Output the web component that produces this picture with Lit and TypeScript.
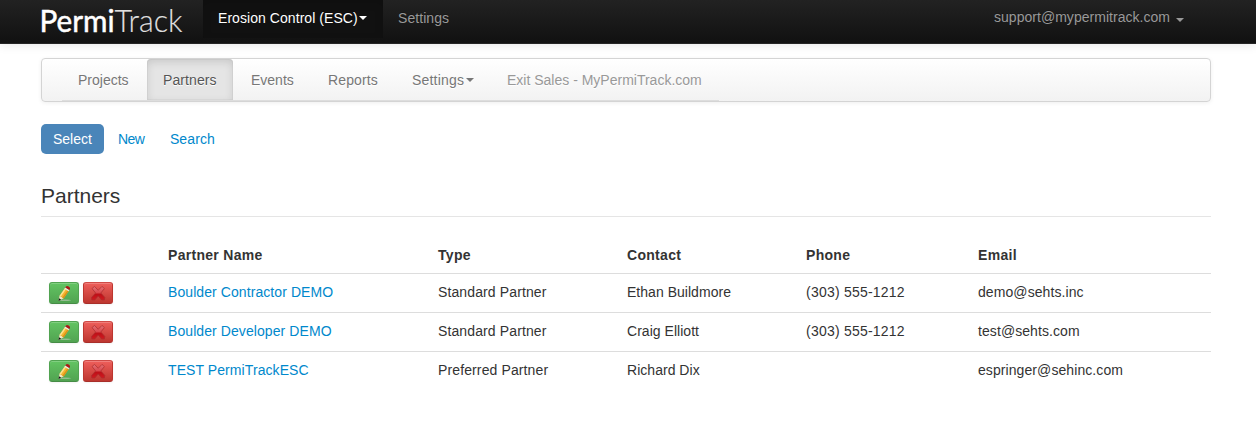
import { LitElement, html, css, svg } from "lit";
import { customElement } from "lit/decorators.js";

interface Partner {
  name: string;
  type: string;
  contact: string;
  phone: string;
  email: string;
}

const partners: Partner[] = [
  { name: "Boulder Contractor DEMO", type: "Standard Partner", contact: "Ethan Buildmore", phone: "(303) 555-1212", email: "demo@sehts.inc" },
  { name: "Boulder Developer DEMO", type: "Standard Partner", contact: "Craig Elliott", phone: "(303) 555-1212", email: "test@sehts.com" },
  { name: "TEST PermiTrackESC", type: "Preferred Partner", contact: "Richard Dix", phone: "", email: "espringer@sehinc.com" },
];

const pencil = html`<svg class="icon" viewBox="0 0 16 16">
  <ellipse cx="9" cy="15.3" rx="6" ry=".8" fill="#a9c4a6" opacity=".75" />
  <path d="M2.6 15.9 3.6 10.6 7.6 13.2Z" fill="#f8e3c4" />
  <path d="M2.5 16 3 13.2 5.2 14.7Z" fill="#151515" />
  <path d="M3.6 10.7 8.7 3.4 12.7 6 7.6 13.4Z" fill="#f5b52e" />
  <path d="M3.6 10.7 8.7 3.4 10 4.2 4.9 11.5Z" fill="#fde391" />
  <path d="M6.5 12.6 11.6 5.3 12.7 6 7.6 13.4Z" fill="#dc9118" />
  <path d="M8.5 3.7 9.4 2.4 13.4 5 12.5 6.3Z" fill="#efe9e2" />
  <path d="M9.3 2.5 10 1.5Q10.9.5 12.7 1.6 14.6 2.9 14 4L13.3 5.1Z" fill="#ad1717" />
</svg>`;

const cross = html`<svg class="icon" viewBox="0 0 16 16">
  <defs>
    <linearGradient id="x" x1="0" y1="0" x2="0" y2="1">
      <stop offset="0" stop-color="#e47376" />
      <stop offset=".48" stop-color="#d8484d" />
      <stop offset=".56" stop-color="#bd1018" />
      <stop offset="1" stop-color="#d01a20" />
    </linearGradient>
  </defs>
  <path d="M2 3.6 4.5 1.4 8.2 5.3 12 1.4 14.4 3.6 10.8 8 14.8 12.4 14.4 15 11.6 15 8.2 11 4.8 15 1.8 15 1.6 12.4 5.6 8Z"
    fill="url(#x)" stroke="#a92c2e" stroke-width=".7" stroke-linejoin="round" />
</svg>`;

@customElement("app-root")
export class AppRoot extends LitElement {
  static styles = css`
    :host {
      display: block;
      height: 429px;
      overflow: hidden;
      background: #fff;
      color: #333;
      font: 14px/20px "Liberation Sans", Arial, sans-serif;
    }
    * { box-sizing: border-box; }
    a { color: #0088cc; text-decoration: none; }
    .navbar {
      height: 44px;
      padding: 0 72px 0 41px;
      display: flex;
      align-items: flex-start;
      background: linear-gradient(#222, #111);
      border-bottom: 1px solid #252525;
      box-shadow: 0 1px 10px rgba(0, 0, 0, 0.1);
    }
    .brand { width: 162px; height: 43px; display: block; overflow: visible; }
    .logo { font-family: Lato, sans-serif; font-size: 30.5px; fill: #fff; stroke: #fff; stroke-width: 0.5px; }
    .logo-light { font-weight: 300; fill: #e0e0e0; stroke: #e0e0e0; stroke-width: 0.1px; }
    .nav-link {
      height: 38px;
      padding: 8px 15px 10px;
      color: #999;
      text-shadow: 0 -1px 0 rgba(0, 0, 0, 0.25);
      letter-spacing: 0.06px;
      display: flex;
      white-space: nowrap;
    }
    .nav-link.active {
      color: #fff;
      background: #111;
      width: 180px;
      box-shadow: inset 0 3px 8px rgba(0, 0, 0, 0.125);
    }
    .account { margin-left: auto; padding: 7px 0 0; letter-spacing: 0.03px; }
    .caret {
      width: 0;
      height: 0;
      border: 4px solid transparent;
      border-top-color: currentColor;
      border-bottom: 0;
      margin: 8px 0 0 1.5px;
    }
    .account .caret { margin: 11px 0 0 6px; }
    .page { padding: 14px 45px 0 41px; }
    .subnav {
      height: 44px;
      padding: 0 20px;
      border: 1px solid #d4d4d4;
      border-radius: 4px;
      background: linear-gradient(#fff, #f2f2f2);
      box-shadow: 0 1px 4px rgba(0, 0, 0, 0.065);
      display: flex;
    }
    .tabs { height: 42px; width: 657px; display: flex; border-bottom: 1px solid #ddd; }
    .tab {
      height: 41px;
      padding: 11px 0 0 16px;
      color: #777;
      display: flex;
      white-space: nowrap;
      text-shadow: 0 1px 0 #fff;
    }
    .tab.projects { width: 85px; }
    .tab.events { width: 77px; }
    .tab.reports { width: 84px; letter-spacing: 0.14px; }
    .tab.settings { width: 95px; letter-spacing: 0.2px; }
    .tab.active {
      width: 86px;
      margin-right: 2px;
      letter-spacing: 0.1px;
      color: #555;
      background: #e5e5e5;
      border-radius: 4px 4px 0 0;
      box-shadow: inset 0 3px 8px rgba(0, 0, 0, 0.125), inset 0 0 0 1px #ddd;
    }
    .tab.muted { color: #999; }
    .pills { display: flex; height: 30px; margin-top: 22px; gap: 2px; }
    .pill { padding: 5px 12px; border-radius: 5px; }
    .pill.active { background: #4a85b9; color: #fff; }
    .pill.new { width: 50px; letter-spacing: -0.5px; }
    .pill.search { letter-spacing: 0.1px; }
    h1 {
      height: 41px;
      margin: 22px 0 20px;
      border-bottom: 1px solid #e5e5e5;
      font-size: 21px;
      line-height: 40px;
      font-weight: 400;
    }
    table { width: 1170px; border-spacing: 0; table-layout: fixed; }
    th, td { text-align: left; vertical-align: top; padding: 8px; height: 39px; border-top: 1px solid #ddd; }
    th { height: 36px; border-top: 0; letter-spacing: 0.3px; }
    td { letter-spacing: 0.08px; }
    .c0 { width: 119px; }
    .c1 { width: 270px; }
    .c2 { width: 189px; }
    .c3 { width: 179px; }
    .c4 { width: 172px; }
    .type { letter-spacing: 0.12px; }
    .phone { letter-spacing: 0.22px; }
    .contact { letter-spacing: 0.03px; }
    .actions { display: flex; gap: 4px; }
    .btn {
      width: 30px;
      height: 22px;
      padding: 0;
      display: flex;
      align-items: center;
      justify-content: center;
      border: 1px solid;
      border-radius: 3px;
      box-shadow: inset 0 1px 0 rgba(255, 255, 255, 0.2), 0 1px 2px rgba(0, 0, 0, 0.05);
    }
    .edit { background: linear-gradient(#62c462, #51a351); border-color: #51a351 #51a351 #468c46; }
    .delete { background: linear-gradient(#ee5f5b, #bd362f); border-color: #cf4b47 #bd362f #a82f2a; }
    .icon { width: 16px; height: 16px; display: block; }
  `;

  private row(p: Partner) {
    return html`<tr>
      <td>
        <div class="actions">
          <button class="btn edit">${pencil}</button>
          <button class="btn delete">${cross}</button>
        </div>
      </td>
      <td><a href="#">${p.name}</a></td>
      <td class="type">${p.type}</td>
      <td class="contact">${p.contact}</td>
      <td class="phone">${p.phone}</td>
      <td>${p.email}</td>
    </tr>`;
  }

  render() {
    return html`
      <nav class="navbar">
        <svg class="brand" viewBox="0 0 162 43">
          ${svg`<text class="logo" x="-1.5" y="31.6" textLength="75" lengthAdjust="spacingAndGlyphs">Permi</text>
          <text class="logo logo-light" x="73.5" y="31.6" textLength="68" lengthAdjust="spacingAndGlyphs">Track</text>`}
        </svg>
        <a class="nav-link active">Erosion Control (ESC)<span class="caret"></span></a>
        <a class="nav-link">Settings</a>
        <a class="nav-link account">support@mypermitrack.com<span class="caret"></span></a>
      </nav>
      <main class="page">
        <div class="subnav">
          <div class="tabs">
            <a class="tab projects">Projects</a>
            <a class="tab active">Partners</a>
            <a class="tab events">Events</a>
            <a class="tab reports">Reports</a>
            <a class="tab settings">Settings<span class="caret"></span></a>
            <a class="tab muted">Exit Sales - MyPermiTrack.com</a>
          </div>
        </div>
        <div class="pills">
          <a class="pill active">Select</a>
          <a class="pill new">New</a>
          <a class="pill search">Search</a>
        </div>
        <h1>Partners</h1>
        <table>
          <thead>
            <tr>
              <th class="c0"></th>
              <th class="c1">Partner Name</th>
              <th class="c2">Type</th>
              <th class="c3">Contact</th>
              <th class="c4">Phone</th>
              <th>Email</th>
            </tr>
          </thead>
          <tbody>${partners.map((p) => this.row(p))}</tbody>
        </table>
      </main>
    `;
  }
}
